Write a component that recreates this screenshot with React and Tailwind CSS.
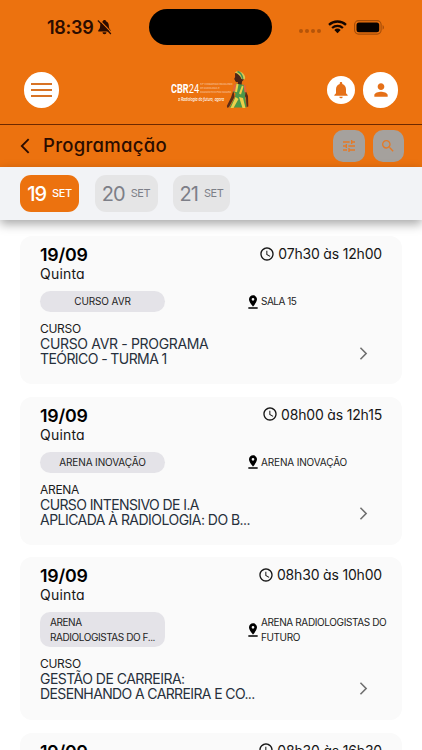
import React from "react";
import { MdAccessTime, MdPinDrop, MdTune, MdSearch, MdPerson, MdNotifications, MdArrowBackIosNew, MdArrowForwardIos } from "react-icons/md";

const days = [
  { day: "19", width: "w-[59px]", active: true },
  { day: "20", width: "w-[63px]", active: false },
  { day: "21", width: "w-[57px]", active: false },
];

const sessions = [
  {
    time: "07h30 às 12h00",
    tag: ["CURSO AVR"],
    place: [{ text: "SALA 15", tracking: "tracking-[-0.500px]" }],
    type: "CURSO",
    title: [
      { text: "CURSO AVR - PROGRAMA", tracking: "tracking-[-0.330px]" },
      { text: "TEÓRICO - TURMA 1", tracking: "tracking-[-0.580px]" },
    ],
    height: "h-[148px]",
  },
  {
    time: "08h00 às 12h15",
    tag: ["ARENA INOVAÇÃO"],
    place: [{ text: "ARENA INOVAÇÃO", tracking: "tracking-[-0.150px]" }],
    type: "ARENA",
    title: [
      { text: "CURSO INTENSIVO DE I.A", tracking: "tracking-[-0.600px]" },
      { text: "APLICADA À RADIOLOGIA: DO B...", tracking: "tracking-[-0.530px]" },
    ],
    height: "h-[148px]",
  },
  {
    time: "08h30 às 10h00",
    tag: ["ARENA", "RADIOLOGISTAS DO F..."],
    place: [
      { text: "ARENA RADIOLOGISTAS DO", tracking: "tracking-[-0.380px]" },
      { text: "FUTURO", tracking: "tracking-[-0.400px]" },
    ],
    type: "CURSO",
    title: [
      { text: "GESTÃO DE CARREIRA:", tracking: "tracking-[-0.520px]" },
      { text: "DESENHANDO A CARREIRA E CO...", tracking: "tracking-[-0.620px]" },
    ],
    height: "h-[163px]",
  },
  {
    time: "08h30 às 16h30",
    height: "h-[148px]",
  },
];

const BellOff = () => (
  <svg width="15" height="16" viewBox="0 0 15 16" className="ml-1">
    <path d="M7.5 1c-.9 0-1.4.6-1.5 1.2C4 2.900 3.200 4.600 3.200 6.500c0 2.600-.8 3.600-1.800 4.700-.5.700-.2 1.300.5 1.300h11.200c.7 0 1-.6.5-1.300-1-1.100-1.800-2.100-1.800-4.700 0-1.900-.8-3.600-2.800-4.300C8.900 1.600 8.400 1 7.500 1zM5.500 13.200a2 2 0 0 0 4 0z" fill="#2b0c00" />
    <path d="M2.200.9l12.200 12.500" stroke="#ec720f" strokeWidth="1.300" />
    <path d="M.9 1.500l13 13.500" stroke="#2b0c00" strokeWidth="1.200" />
  </svg>
);

const Wifi = () => (
  <svg width="19" height="14" viewBox="0 0 19 14" className="ml-[7px]">
    <g fill="none" stroke="#130500" strokeWidth="2.300">
      <path d="M1 4.900a12.300 12.300 0 0 1 17 0" />
      <path d="M4.100 8a7.900 7.900 0 0 1 10.800 0" />
    </g>
    <path d="M6.300 10.100a4.700 4.700 0 0 1 6.400 0L9.500 13.300z" fill="#130500" />
  </svg>
);

const Battery = () => (
  <svg width="31" height="15" viewBox="0 0 31 15" className="ml-[7px]">
    <rect x=".6" y=".6" width="26.500" height="13.500" rx="4" fill="none" stroke="#a44c08" strokeWidth="1.100" />
    <rect x="2.500" y="2.500" width="22.700" height="9.700" rx="2.500" fill="#080200" />
    <path d="M28.600 5v4.800c1.800-.8 1.800-4 0-4.800z" fill="#a44c08" />
  </svg>
);

const Woman = () => (
  <svg width="24" height="39" viewBox="0 0 24 39" className="shrink-0">
    {/* head and neck */}
    <path d="M9 3.500c2-2 6-1 7 2l2 4-2 2-.5 4-4-.5.500-3c-1.500.5-3-.2-3-1.700l-.8-1.300.9-2z" fill="#4a2518" />
    {/* arms */}
    <path d="M7.500 20L5 27.500 .8 36l.7 2 1.500-1L8.500 27zM18.500 18l3.500 8 .3 10.500-1.800.5-.5-9-3-5z" fill="#5a2b18" />
    {/* turban */}
    <path d="M8.800 2.500C11 .3 15 .8 17.500 4c2 2.500 2 4.500 1 5.500l-3-.5C14.500 5.500 12 3.700 8.800 2.500z" fill="#dcc651" />
    <path d="M11.500 1.500c3 1 4.500 3 5.200 7.300" fill="none" stroke="#3f9358" strokeWidth="1.500" />
    {/* dress */}
    <path d="M10 13.500l5 1 4 .5.500 8-.5 3 1.500 11.500H3.500L9 27l.5-4-2.500-1z" fill="#4a984a" />
    <path d="M8 15l2.500-1.500L9.500 22l-3-1zM17.500 14l2 1.500 1 6.500-2 .5z" fill="#e2663f" />
    <path d="M10.500 13.800l2 .4-1.500 8-2-.5zM9.500 27L4.500 38h3l5-9zM16 15.500l1.500 1-2.500 8-2-1zM13 27l3.500 11h3L17 28z" fill="#ecd04a" />
  </svg>
);

const Logo = () => (
  <div className="flex h-[39px] w-[79px]">
    <div className="w-[55px] shrink-0 pt-[9.500px] text-white">
      <div className="flex h-[16px] items-center">
        <span className="flex w-[29px] shrink-0 origin-left scale-x-[.67] whitespace-nowrap font-['Roboto'] text-[13.700px] leading-[16px]">
          <b>CBR</b>24
        </span>
        <span className="w-[26px] origin-left scale-x-[.85] whitespace-nowrap text-[2.700px] leading-[4px] opacity-60">
          53º CONGRESSO BRASILEIRO
          <br />
          DE RADIOLOGIA E
          <br />
          DIAGNÓSTICO POR IMAGEM
        </span>
      </div>
      <div className="ml-[7px] w-[44px] origin-left scale-x-[.7] whitespace-nowrap text-[4.700px] font-medium italic leading-[6px]">a Radiologia do futuro, agora</div>
    </div>
    <Woman />
  </div>
);

const SessionCard = ({ session }) => {
  const twoLines = session.tag && session.tag.length > 1;

  return (
    <div className={`${session.height} shrink-0 rounded-xl bg-[#fafafa] pl-5 pr-[15px] pt-[9px]`}>
      <div className="flex justify-between pr-[5px]">
        <div>
          <div className="text-[17.800px] font-semibold leading-5 tracking-[-0.200px] text-black">19/09</div>
          <div className="text-[14px] leading-[17px] tracking-[0.200px] text-[#161616]">Quinta</div>
        </div>
        <div className="flex h-[17px] items-center gap-[3px] text-[14px] text-[#161616]">
          <MdAccessTime size={16} />
          <span className="whitespace-nowrap tracking-[-0.180px]">{session.time}</span>
        </div>
      </div>
      {session.tag && (
        <>
          <div className="mt-[9px] flex items-center">
            <div
              className={`flex w-[125px] flex-col bg-[#e4e3e8] text-[10px] text-[#222] ${
                twoLines
                  ? "h-[35px] rounded-[10px] px-[10px] pt-[3px] leading-[14.800px] tracking-[-0.430px]"
                  : "h-[21px] items-center rounded-full leading-[21px] tracking-[-0.130px]"
              }`}
            >
              {session.tag.map((line) => (
                <span key={line} className="whitespace-nowrap">{line}</span>
              ))}
            </div>
            <div className="ml-[80px] flex items-center text-[#222]">
              <MdPinDrop size={16} className="text-black" />
              <div className="flex flex-col whitespace-nowrap text-[10px] leading-[14.800px]">
                {session.place.map((line) => (
                  <span key={line.text} className={line.tracking}>{line.text}</span>
                ))}
              </div>
            </div>
          </div>
          <div className="mt-[9px] flex justify-between">
            <div>
              <div className="text-[12px] leading-[15px] tracking-[-0.300px] text-[#1c1c1c]">{session.type}</div>
              <div className="flex flex-col whitespace-nowrap text-[14px] leading-[15.300px] text-[#27303c]">
                {session.title.map((line) => (
                  <span key={line.text} className={line.tracking}>{line.text}</span>
                ))}
              </div>
            </div>
            <MdArrowForwardIos size={15} className="mr-[16px] mt-[24.500px] text-[#707070]" />
          </div>
        </>
      )}
    </div>
  );
};

const App = () => {
  return (
    <div className="flex h-[750px] w-[422px] flex-col overflow-hidden bg-white font-['Inter',sans-serif] [font-feature-settings:'cv11']">
      <header className="h-[125px] shrink-0 border-b border-[#6d2900] bg-[#ec720f]">
        <div className="flex h-[54px] items-center pl-[47px]">
          <span className="w-[46px] whitespace-nowrap text-[18px] font-semibold tracking-[-0.300px] text-[#2b0c00]">18:39</span>
          <BellOff />
          <div className="ml-[37px] h-[36px] w-[123px] rounded-full bg-black" />
          <div className="ml-[27px] mt-[8px] flex gap-[2px]">
            {[0, 1, 2, 3].map((dot) => (
              <span key={dot} className="h-1 w-1 rounded-full bg-[#b55409]" />
            ))}
          </div>
          <Wifi />
          <Battery />
        </div>
        <div className="flex h-[71px] items-center pl-6">
          <button className="flex h-9 w-[35px] flex-col items-center justify-center gap-1 rounded-full bg-white">
            <span className="h-[2px] w-[21px] bg-[#d87325]" />
            <span className="h-[2px] w-[21px] bg-[#d87325]" />
            <span className="h-[2px] w-[21px] bg-[#d87325]" />
          </button>
          <div className="ml-[112px]">
            <Logo />
          </div>
          <button className="ml-[77px] flex h-7 w-7 items-center justify-center rounded-full bg-white text-[#e57018]">
            <MdNotifications size={20} />
          </button>
          <button className="ml-2 flex h-9 w-[35px] items-center justify-center rounded-full bg-white text-[#e57018]">
            <MdPerson size={20} />
          </button>
        </div>
      </header>

      <div className="flex h-[42px] shrink-0 items-center bg-[#ec720f] pl-[16px] pr-[18px]">
        <MdArrowBackIosNew size={18} className="text-[#2b0c00]" />
        <h1 className="ml-[9px] whitespace-nowrap text-[18.500px] font-medium tracking-[0.300px] text-[#2b0c00]">Programação</h1>
        <div className="ml-auto flex gap-2 text-[#e47a27]">
          <button className="flex h-[31.500px] w-[31.500px] items-center justify-center rounded-[10px] bg-[#a5a19d]">
            <MdTune size={16} />
          </button>
          <button className="flex h-[31.500px] w-[31.500px] items-center justify-center rounded-[10px] bg-[#a5a19d]">
            <MdSearch size={16} />
          </button>
        </div>
      </div>

      <nav className="z-10 flex h-[53px] shrink-0 items-center gap-[15.500px] bg-[#f2f3f6] pl-5 shadow-[0_4px_10px_rgba(0,0,0,0.350)]">
        {days.map((item) => (
          <button
            key={item.day}
            className={`flex h-[37px] items-center justify-center gap-[6px] rounded-[11px] ${item.width} ${
              item.active ? "bg-[#ec720f] text-white" : "bg-[#e5e5e6] text-[#7d7f88]"
            }`}
          >
            <span className={`text-[20px] tracking-[-1px] ${item.active ? "font-medium" : ""}`}>{item.day}</span>
            <span className={`text-[11px] tracking-[-0.400px] ${item.active ? "font-medium" : ""}`}>SET</span>
          </button>
        ))}
      </nav>

      <main className="flex flex-col gap-[12.500px] px-5 pt-4">
        {sessions.map((session) => (
          <SessionCard key={session.time} session={session} />
        ))}
      </main>
    </div>
  );
};

export default App;
